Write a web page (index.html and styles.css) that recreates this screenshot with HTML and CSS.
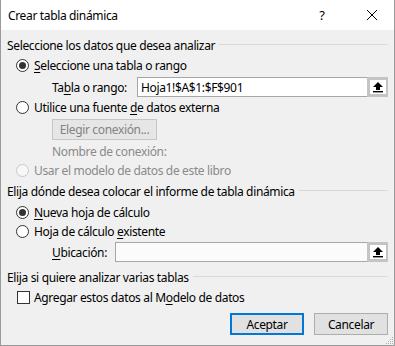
FILE: index.html
```html
<!DOCTYPE html>
<html lang="es">
<head>
<meta charset="utf-8">
<title>Crear tabla dinámica</title>
<link rel="stylesheet" href="styles.css">
</head>
<body>
<div class="dialog">
  <div class="titlebar">
    <span class="title">Crear tabla dinámica</span>
    <span class="help">?</span>
    <span class="close"><svg width="12" height="12" viewBox="0 0 12 12"><path d="M1 1 L11 11 M11 1 L1 11" stroke="#000" stroke-width="1" fill="none"/></svg></span>
  </div>
  <div class="content">
    <div class="heading h1"><span>Seleccione los datos que desea analizar</span></div>
    <div class="row radio-row r1"><span class="radio checked"></span><span><u>S</u>eleccione una tabla o rango</span></div>
    <div class="row field-row f1"><span class="label">Ta<u>b</u>la o rango:</span><div class="input"><span class="value">Hoja1!$A$1:$F$901</span><span class="pick"><svg width="12" height="12" viewBox="0 0 12 12"><path d="M6 1 L11 6 L8 6 L8 9 L4 9 L4 6 L1 6 Z" fill="#000"/><rect x="1" y="10" width="10" height="1.4" fill="#000"/></svg></span></div></div>
    <div class="row radio-row r2"><span class="radio"></span><span>Utilice una fuente <u>d</u>e datos externa</span></div>
    <div class="row btn-row"><span class="btn disabled">Elegir conexión...</span></div>
    <div class="row sub-row disabled-text">Nombre de conexión:</div>
    <div class="row radio-row r3 disabled-text"><span class="radio disabled"></span><span>Usar el modelo de datos de este libro</span></div>
    <div class="heading h2"><span>Elija dónde desea colocar el informe de tabla dinámica</span></div>
    <div class="row radio-row r4"><span class="radio checked"></span><span><u>N</u>ueva hoja de cálculo</span></div>
    <div class="row radio-row r5"><span class="radio"></span><span>Hoja de cálculo <u>e</u>xistente</span></div>
    <div class="row field-row f2"><span class="label"><u>U</u>bicación:</span><div class="input"><span class="value"></span><span class="pick"><svg width="12" height="12" viewBox="0 0 12 12"><path d="M6 1 L11 6 L8 6 L8 9 L4 9 L4 6 L1 6 Z" fill="#000"/><rect x="1" y="10" width="10" height="1.4" fill="#000"/></svg></span></div></div>
    <div class="heading h3"><span>Elija si quiere analizar varias tablas</span></div>
    <div class="row check-row"><span class="checkbox"></span><span>Agregar estos datos al M<u>o</u>delo de datos</span></div>
    <div class="row actions"><span class="btn primary">Aceptar</span><span class="btn">Cancelar</span></div>
  </div>
  <svg class="grip" width="10" height="10" viewBox="0 0 10 10"><g fill="#b0b0b0"><rect x="8" y="2" width="1" height="1"/><rect x="6" y="4" width="1" height="1"/><rect x="8" y="4" width="1" height="1"/><rect x="4" y="6" width="1" height="1"/><rect x="6" y="6" width="1" height="1"/><rect x="8" y="6" width="1" height="1"/><rect x="2" y="8" width="1" height="1"/><rect x="4" y="8" width="1" height="1"/><rect x="6" y="8" width="1" height="1"/><rect x="8" y="8" width="1" height="1"/></g></svg>
</div>
</body>
</html>
```
FILE: styles.css
```css
* { box-sizing: border-box; }
html, body { margin: 0; padding: 0; }
body {
  font-family: "Noto Sans", "Open Sans", sans-serif;
  font-size: 12px;
  letter-spacing: -0.35px;
  color: #000;
  background: #f0f0f0;
}
u { text-decoration: underline; text-underline-offset: 2px; }
.dialog {
  position: relative;
  width: 395px;
  height: 346px;
  background: #f0f0f0;
  border-left: 1px solid #9a9a9a;
  border-right: 1px solid #9a9a9a;
  border-bottom: 1px solid #9a9a9a;
  overflow: hidden;
}
.titlebar {
  height: 30px;
  background: #fff;
  display: flex;
  align-items: center;
  padding-left: 8px;
  margin-left: -1px;
  margin-right: -1px;
}
.title { flex: 1; }
.help { width: 12px; text-align: center; margin-right: 38px; font-size: 13px; }
.close { width: 12px; height: 12px; margin-right: 17px; display: flex; }
.content {
  padding: 5px 6px 0 6px;
  display: flex;
  flex-direction: column;
}
.heading {
  display: flex;
  align-items: center;
  gap: 4px;
}
.heading::after {
  content: "";
  flex: 1;
  height: 1px;
  background: #d9d9d9;
  margin-top: -1px;
}
.h1 { height: 20px; }
.h2 { height: 24px; }
.h3 { height: 20px; margin-top: 5px; }
.row { display: flex; align-items: center; }
.radio-row { padding-left: 9px; gap: 5px; }
.r1 { height: 21px; }
.r2 { height: 21px; }
.r3 { height: 17px; }
.r4 { height: 18px; }
.r5 { height: 20px; }
.radio {
  width: 13px; height: 13px;
  border: 1px solid #333;
  border-radius: 50%;
  background: #fff;
  display: flex; align-items: center; justify-content: center;
}
.radio.checked::after {
  content: ""; width: 7px; height: 7px; border-radius: 50%; background: #333;
}
.radio.disabled { border-color: #c8c8c8; background: #f7f7f7; }
.disabled-text { color: #8a8a8a; }
.field-row { height: 20px; margin-top: 1px; padding-left: 45px; }
.f1 .label { width: 85px; }
.f2 .label { width: 63px; }
.input {
  flex: 1;
  height: 20px;
  border: 1px solid #a6a6a6;
  background: #fff;
  display: flex;
  align-items: stretch;
  margin-right: 0;
}
.value { flex: 1; padding-left: 3px; display: flex; align-items: center; }
.pick {
  width: 21px;
  border: 3px solid #c4c4c4;
  border-right-width: 2px;
  margin: -1px -1px -1px 0;
  background: #fff;
  display: flex; align-items: center; justify-content: center;
}
.f2 .input { background: #fbfbfb; }
.btn-row { height: 21px; margin-top: 1px; padding-left: 45px; }
.btn {
  height: 21px;
  border: 1px solid #adadad;
  background: #e1e1e1;
  display: flex; align-items: center; justify-content: center;
}
.btn-row .btn { width: 105px; }
.btn.disabled { color: #838383; border-color: #c6c6c6; background: #e6e6e6; }
.sub-row { height: 22px; padding-left: 45px; }
.check-row { height: 20px; padding-left: 10px; gap: 4px; }
.checkbox { width: 13px; height: 13px; border: 1px solid #333; background: #fff; }
.actions { justify-content: flex-end; gap: 10px; margin-top: 6px; padding-right: 0; }
.actions .btn { width: 74px; height: 22px; }
.btn.primary { border: 2px solid #0078d7; }
.grip { position: absolute; right: 0; bottom: 0; }
```
